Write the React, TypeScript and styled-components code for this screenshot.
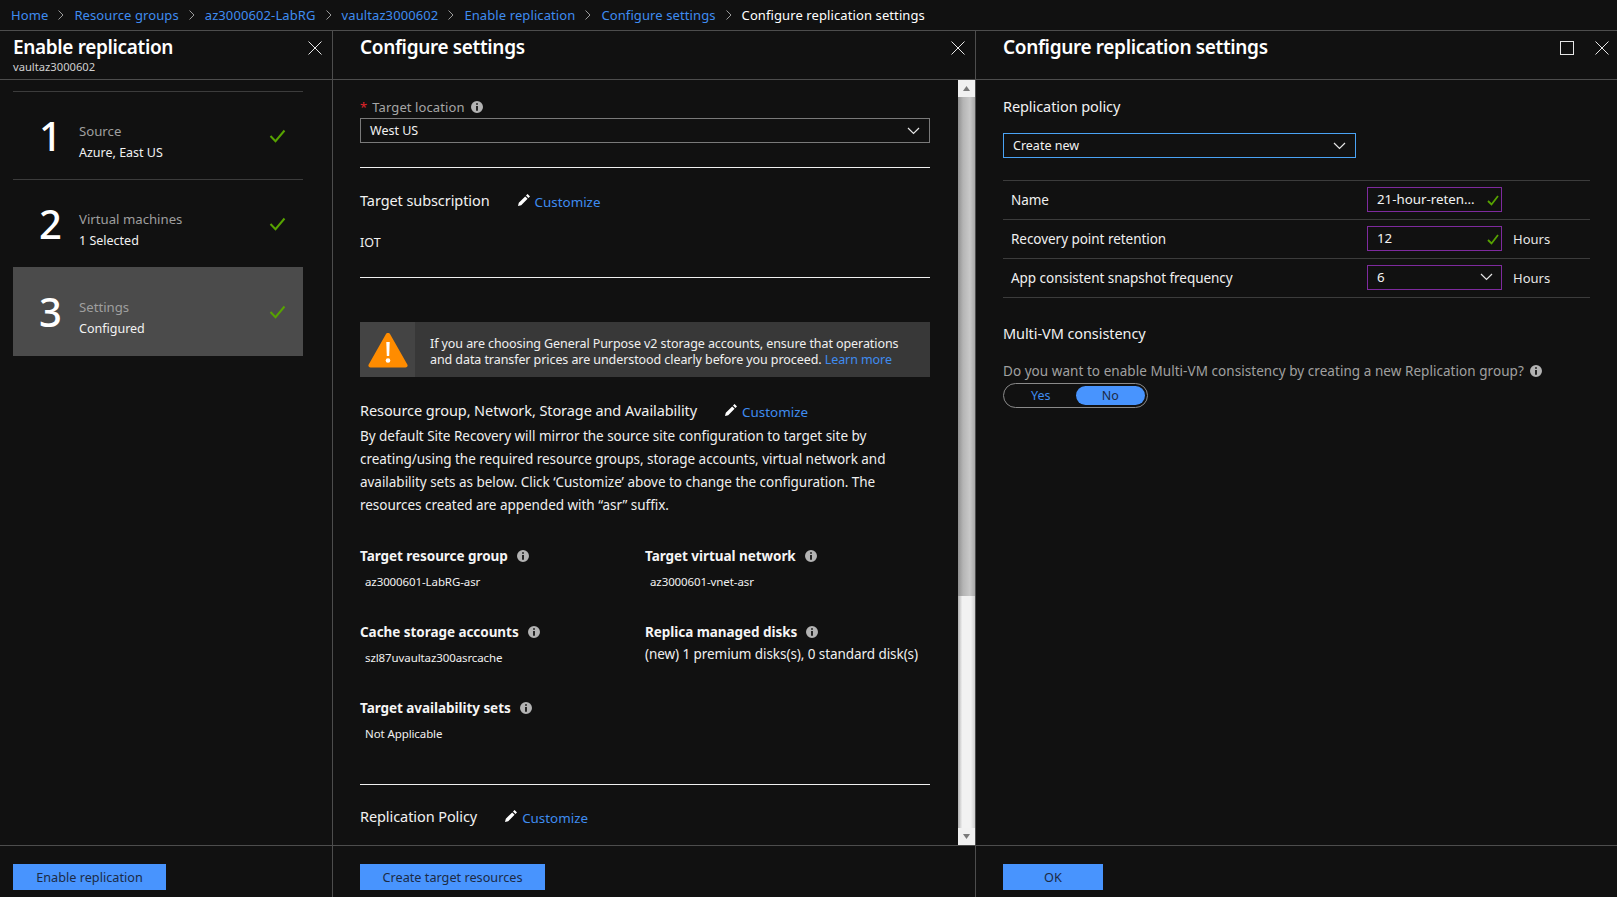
import React from 'react';
import styled, { createGlobalStyle } from 'styled-components';

const GlobalStyle = createGlobalStyle`
  html, body {
    margin: 0;
    padding: 0;
    background: #111111;
  }
  * {
    box-sizing: border-box;
  }
`;

const LINK = '#3f8cf0';
const BORDER = '#4d4d4d';

const Page = styled.div`
  width: 1617px;
  height: 897px;
  display: flex;
  flex-direction: column;
  overflow: hidden;
  background: #111111;
  color: #f2f2f2;
  font-family: 'Noto Sans', 'Open Sans', sans-serif;
  font-size: 13px;
`;

const Breadcrumb = styled.nav`
  height: 31px;
  flex: none;
  display: flex;
  align-items: center;
  padding: 0 0 1px 11px;
  border-bottom: 1px solid ${BORDER};
  font-size: 13px;
  letter-spacing: 0.1px;
`;

const Crumb = styled.span<{ $current?: boolean }>`
  color: ${(p) => (p.$current ? '#ffffff' : LINK)};
`;

const CrumbSep = styled.svg`
  width: 6px;
  height: 10px;
  margin: 0 10px 0 10px;
  fill: none;
  stroke: #9a9a9a;
  stroke-width: 1;
`;

const Blades = styled.div`
  flex: 1;
  display: flex;
  min-height: 0;
`;

const Blade = styled.section<{ $width: number; $last?: boolean }>`
  width: ${(p) => p.$width}px;
  flex: none;
  display: flex;
  flex-direction: column;
  border-right: ${(p) => (p.$last ? 'none' : `1px solid ${BORDER}`)};
`;

const BladeHeader = styled.header<{ $inset: number; $right?: number }>`
  height: 49px;
  flex: none;
  display: flex;
  justify-content: space-between;
  align-items: flex-start;
  padding: 4px ${(p) => p.$right ?? 10}px 0 ${(p) => p.$inset}px;
  border-bottom: 1px solid ${BORDER};
`;

const BladeTitle = styled.h2`
  margin: 0 0 1px;
  font-size: 19px;
  line-height: 25px;
  font-weight: 600;
  letter-spacing: -0.35px;
  color: #ffffff;
`;

const BladeSub = styled.div`
  font-size: 11.2px;
  line-height: 12px;
  color: #d0d0d0;
`;

const HeaderIcons = styled.div`
  display: flex;
  gap: 21px;
  padding-top: 6px;
`;

const HeaderIcon = styled.svg`
  width: 14px;
  height: 14px;
  fill: none;
  stroke: #e6e6e6;
  stroke-width: 1;
  display: block;
`;

const BladeBody = styled.div`
  flex: 1;
  display: flex;
  min-height: 0;
  overflow: hidden;
`;

const BladeFooter = styled.footer<{ $inset: number }>`
  height: 52px;
  flex: none;
  padding: 18px 0 0 ${(p) => p.$inset}px;
  border-top: 1px solid ${BORDER};
`;

const PrimaryButton = styled.button<{ $width: number }>`
  display: block;
  width: ${(p) => p.$width}px;
  height: 26px;
  padding: 0;
  border: none;
  background: #4894fe;
  color: #1c2b45;
  font: inherit;
  font-size: 12.7px;
`;

const Steps = styled.div`
  width: 100%;
  padding: 11px 29px 0 13px;
`;

const Step = styled.div<{ $active?: boolean }>`
  height: ${(p) => (p.$active ? 89 : 88)}px;
  display: flex;
  align-items: center;
  background: ${(p) => (p.$active ? '#4b4b4b' : 'transparent')};
  border-top: ${(p) => (p.$active ? 'none' : `1px solid #3c3c3c`)};
`;

const StepNumber = styled.div`
  width: 66px;
  padding-left: 26px;
  font-size: 40px;
  line-height: 40px;
  font-weight: 500;
  color: #ffffff;
`;

const StepText = styled.div`
  flex: 1;
  padding-top: 13px;
`;

const StepLabel = styled.div`
  font-size: 13.2px;
  line-height: 21px;
  color: #9f9f9f;
`;

const StepValue = styled.div`
  font-size: 12.5px;
  line-height: 21px;
  color: #f2f2f2;
`;

const StepCheck = styled.svg`
  width: 17px;
  height: 14px;
  margin: 0 17px 0 0;
  fill: none;
  stroke: #57a300;
  stroke-width: 2;
`;

const Scroller = styled.div`
  flex: 1;
  min-width: 0;
  padding: 0 28px 0 27px;
  overflow: hidden;
`;

const Scrollbar = styled.div`
  width: 17px;
  flex: none;
  display: flex;
  flex-direction: column;
  background: #f1f1f1;
`;

const ScrollArrow = styled.svg`
  width: 17px;
  height: 17px;
  flex: none;
  fill: #7a7a7a;
`;

const ScrollThumb = styled.div`
  height: 499px;
  flex: none;
  background: linear-gradient(90deg, #8f8f8f, #b5b5b5 30%, #c9c9c9 70%, #a8a8a8);
`;

const ScrollTrack = styled.div`
  flex: 1;
  background: linear-gradient(90deg, #b0b0b0, #f2f2f2 25%, #f2f2f2 75%, #cfcfcf);
`;

const FieldLabel = styled.div`
  display: flex;
  align-items: center;
  height: 22px;
  margin-top: 16px;
  color: #a6a6a6;
  font-size: 13px;
  letter-spacing: 0.1px;
`;

const Required = styled.span`
  color: #e0242a;
  margin-right: 5px;
`;

const InfoIcon = styled.svg<{ $gap?: number }>`
  width: 12px;
  height: 12px;
  margin-left: ${(p) => p.$gap ?? 6}px;
  flex: none;
  fill: #b3b3b3;
`;

const Select = styled.div<{ $width?: number; $focused?: boolean; $top?: number }>`
  width: ${(p) => (p.$width ? `${p.$width}px` : '100%')};
  height: 25px;
  margin-top: ${(p) => p.$top ?? 0}px;
  display: flex;
  align-items: center;
  justify-content: space-between;
  padding: 0 9px 0 9px;
  border: 1px solid ${(p) => (p.$focused ? '#4aa3f5' : '#7a7a7a')};
  font-size: 12.5px;
  color: #f2f2f2;
`;

const Chevron = styled.svg`
  width: 13px;
  height: 8px;
  fill: none;
  stroke: #e6e6e6;
  stroke-width: 1.2;
`;

const Rule = styled.hr<{ $top: number }>`
  height: 1px;
  margin: ${(p) => p.$top}px 0 0;
  border: none;
  background: #f0f0f0;
`;

const SectionRow = styled.div<{ $top: number; $gap: number }>`
  display: flex;
  align-items: center;
  height: 20px;
  margin-top: ${(p) => p.$top}px;
  gap: ${(p) => p.$gap}px;
  font-size: 14.5px;
  letter-spacing: -0.08px;
  color: #f2f2f2;
`;

const CustomizeLink = styled.a`
  display: flex;
  align-items: center;
  gap: 4px;
  color: ${LINK};
  font-size: 13.4px;
  letter-spacing: 0;
  padding-top: 3px;
`;

const Pencil = styled.svg`
  width: 14px;
  height: 14px;
  fill: #ffffff;
  margin-top: -4px;
`;

const PlainValue = styled.div`
  margin-top: 23px;
  font-size: 12.5px;
  line-height: 20px;
`;

const Warning = styled.div`
  display: flex;
  height: 55px;
  margin-top: 44px;
  background: #383838;
`;

const WarningIconCell = styled.div`
  width: 55px;
  flex: none;
  display: flex;
  align-items: center;
  justify-content: center;
  background: #444444;
`;

const WarningIcon = styled.svg`
  width: 40px;
  height: 36px;
`;

const WarningText = styled.div`
  padding: 14px 0 0 15px;
  font-size: 12.5px;
  line-height: 16px;
  letter-spacing: -0.08px;
  color: #f0f0f0;
`;

const InlineLink = styled.a`
  color: ${LINK};
`;

const Paragraph = styled.p`
  margin: 5px 0 0;
  font-size: 13.5px;
  line-height: 23px;
  letter-spacing: -0.03px;
  color: #efefef;
`;

const SummaryGrid = styled.div`
  display: grid;
  grid-template-columns: 285px 1fr;
  margin-top: 29px;
`;

const SummaryCell = styled.div`
  height: 76px;
`;

const SummaryLabel = styled.div`
  display: flex;
  align-items: center;
  height: 20px;
  font-size: 13.5px;
  font-weight: 700;
  letter-spacing: -0.05px;
  color: #f5f5f5;
`;

const SummaryValue = styled.div<{ $flush?: boolean }>`
  margin-top: ${(p) => (p.$flush ? '4px' : '8px')};
  padding-left: ${(p) => (p.$flush ? '0' : '5px')};
  font-size: ${(p) => (p.$flush ? '13.5px' : '11.5px')};
  line-height: 16px;
  letter-spacing: ${(p) => (p.$flush ? '-0.07px' : '-0.1px')};
  color: #f0f0f0;
`;

const RightBody = styled.div`
  flex: 1;
  min-width: 0;
  padding: 0 27px 0 27px;
`;

const SubHeading = styled.div<{ $top: number }>`
  margin-top: ${(p) => p.$top}px;
  font-size: 14.5px;
  line-height: 20px;
  letter-spacing: -0.08px;
  color: #f2f2f2;
`;

const SettingsTable = styled.div`
  margin-top: 22px;
  border-top: 1px solid #3c3c3c;
`;

const SettingsRow = styled.div`
  height: 39px;
  display: flex;
  align-items: center;
  padding: 0 0 1px 8px;
  border-bottom: 1px solid #3c3c3c;
`;

const SettingsLabel = styled.div`
  width: 356px;
  flex: none;
  font-size: 13.5px;
  letter-spacing: -0.04px;
  color: #f0f0f0;
`;

const SettingsInput = styled.div<{ $chevron?: boolean }>`
  width: 135px;
  height: 25px;
  flex: none;
  display: flex;
  align-items: center;
  justify-content: space-between;
  padding: 0 ${(p) => (p.$chevron ? 8 : 2)}px 2px 9px;
  border: 1px solid #7e2a9e;
  font-size: 13.3px;
  color: #f2f2f2;
`;

const InputCheck = styled.svg`
  width: 12px;
  height: 11px;
  margin-top: 3px;
  fill: none;
  stroke: #57a300;
  stroke-width: 1.8;
`;

const Unit = styled.div`
  margin-left: 11px;
  font-size: 13px;
  color: #e6e6e6;
`;

const Question = styled.div`
  display: flex;
  align-items: center;
  margin-top: 18px;
  height: 20px;
  font-size: 13.5px;
  letter-spacing: 0.05px;
  color: #a0a0a0;
`;

const Toggle = styled.div`
  width: 145px;
  height: 25px;
  margin-top: 2px;
  display: flex;
  align-items: center;
  padding: 0 2px;
  border: 1px solid #8a8a8a;
  border-radius: 13px;
`;

const ToggleOption = styled.div<{ $on?: boolean }>`
  flex: 1;
  height: 19px;
  display: flex;
  align-items: center;
  justify-content: center;
  border-radius: 10px;
  background: ${(p) => (p.$on ? '#4894fe' : 'transparent')};
  color: ${(p) => (p.$on ? '#1c2b45' : LINK)};
  font-size: 12.5px;
`;

const CloseGlyph = () => (
  <HeaderIcon viewBox="0 0 14 14">
    <path d="M.5.5l13 13M13.5.5l-13 13" />
  </HeaderIcon>
);

const Info = ({ gap }: { gap?: number }) => (
  <InfoIcon $gap={gap} viewBox="0 0 11 11">
    <path d="M5.5 0a5.5 5.5 0 1 0 0 11a5.5 5.5 0 0 0 0-11zM4.7 2h1.6v1.5H4.7zM4.7 4.5h1.6V9H4.7z" fillRule="evenodd" />
  </InfoIcon>
);

const ChevronGlyph = () => (
  <Chevron viewBox="0 0 13 8">
    <path d="M1 1l5.500 5.500L12 1" />
  </Chevron>
);

const CheckGlyph = () => (
  <InputCheck viewBox="0 0 12 11">
    <path d="M1 6l3.500 3.500L11 1" />
  </InputCheck>
);

const Customize = () => (
  <CustomizeLink>
    <Pencil viewBox="0 0 14 14">
      <path d="M10.600 1l2.400 2.400-1.600 1.600L9 2.600zM8.200 3.400l2.400 2.400-6.400 6.400L1 13l.8-3.200z" />
    </Pencil>
    Customize
  </CustomizeLink>
);

const steps = [
  { n: '1', label: 'Source', value: 'Azure, East US' },
  { n: '2', label: 'Virtual machines', value: '1 Selected' },
  { n: '3', label: 'Settings', value: 'Configured', active: true },
];

const crumbs = [
  'Home',
  'Resource groups',
  'az3000602-LabRG',
  'vaultaz3000602',
  'Enable replication',
  'Configure settings',
];

const summary = [
  { label: 'Target resource group', value: 'az3000601-LabRG-asr' },
  { label: 'Target virtual network', value: 'az3000601-vnet-asr' },
  { label: 'Cache storage accounts', value: 'szl87uvaultaz300asrcache' },
  { label: 'Replica managed disks', value: '(new) 1 premium disks(s), 0 standard disk(s)', flush: true },
  { label: 'Target availability sets', value: 'Not Applicable' },
];

const App = () => {
  return (
    <Page>
      <GlobalStyle />
      <Breadcrumb>
        {crumbs.map((c) => (
          <React.Fragment key={c}>
            <Crumb>{c}</Crumb>
            <CrumbSep viewBox="0 0 6 10">
              <path d="M.5.5L5 5 .5 9.500" />
            </CrumbSep>
          </React.Fragment>
        ))}
        <Crumb $current>Configure replication settings</Crumb>
      </Breadcrumb>

      <Blades>
        <Blade $width={333}>
          <BladeHeader $inset={13}>
            <div>
              <BladeTitle>Enable replication</BladeTitle>
              <BladeSub>vaultaz3000602</BladeSub>
            </div>
            <HeaderIcons>
              <CloseGlyph />
            </HeaderIcons>
          </BladeHeader>
          <BladeBody>
            <Steps>
              {steps.map((s) => (
                <Step key={s.n} $active={s.active}>
                  <StepNumber>{s.n}</StepNumber>
                  <StepText>
                    <StepLabel>{s.label}</StepLabel>
                    <StepValue>{s.value}</StepValue>
                  </StepText>
                  <StepCheck viewBox="0 0 17 14">
                    <path d="M1.500 7l5 5.200L15.500 1.500" />
                  </StepCheck>
                </Step>
              ))}
            </Steps>
          </BladeBody>
          <BladeFooter $inset={13}>
            <PrimaryButton $width={153}>Enable replication</PrimaryButton>
          </BladeFooter>
        </Blade>

        <Blade $width={643}>
          <BladeHeader $inset={27}>
            <BladeTitle>Configure settings</BladeTitle>
            <HeaderIcons>
              <CloseGlyph />
            </HeaderIcons>
          </BladeHeader>
          <BladeBody>
            <Scroller>
              <FieldLabel>
                <Required>*</Required>
                Target location
                <Info />
              </FieldLabel>
              <Select>
                West US
                <ChevronGlyph />
              </Select>
              <Rule $top={24} />
              <SectionRow $top={22} $gap={27}>
                Target subscription
                <Customize />
              </SectionRow>
              <PlainValue>IOT</PlainValue>
              <Rule $top={24} />
              <Warning>
                <WarningIconCell>
                  <WarningIcon viewBox="0 0 40 36">
                    <path
                      d="M20 1c1 0 1.800.5 2.300 1.400l17 30c.8 1.500 0 3.100-1.800 3.100H2.500C.7 35.500-.1 33.900.7 32.400l17-30C18.200 1.500 19 1 20 1z"
                      fill="#ff8c00"
                    />
                    <path d="M18.300 10h3.400l-.5 14h-2.400z" fill="#ffffff" />
                    <circle cx="20" cy="28.500" r="2.300" fill="#ffffff" />
                  </WarningIcon>
                </WarningIconCell>
                <WarningText>
                  If you are choosing General Purpose v2 storage accounts, ensure that operations
                  <br />
                  and data transfer prices are understood clearly before you proceed.{' '}
                  <InlineLink>Learn more</InlineLink>
                </WarningText>
              </Warning>
              <SectionRow $top={23} $gap={27}>
                Resource group, Network, Storage and Availability
                <Customize />
              </SectionRow>
              <Paragraph>
                By default Site Recovery will mirror the source site configuration to target site by
                <br />
                creating/using the required resource groups, storage accounts, virtual network and
                <br />
                availability sets as below. Click ‘Customize’ above to change the configuration. The
                <br />
                resources created are appended with “asr” suffix.
              </Paragraph>
              <SummaryGrid>
                {summary.map((s) => (
                  <SummaryCell key={s.label}>
                    <SummaryLabel>
                      {s.label}
                      <Info gap={9} />
                    </SummaryLabel>
                    <SummaryValue $flush={s.flush}>{s.value}</SummaryValue>
                  </SummaryCell>
                ))}
              </SummaryGrid>
              <Rule $top={10} />
              <SectionRow $top={21} $gap={27}>
                Replication Policy
                <Customize />
              </SectionRow>
            </Scroller>
            <Scrollbar>
              <ScrollArrow viewBox="0 0 17 17">
                <path d="M8.500 6l3.500 5H5z" />
              </ScrollArrow>
              <ScrollThumb />
              <ScrollTrack />
              <ScrollArrow viewBox="0 0 17 17">
                <path d="M8.500 11L5 6h7z" />
              </ScrollArrow>
            </Scrollbar>
          </BladeBody>
          <BladeFooter $inset={27}>
            <PrimaryButton $width={185}>Create target resources</PrimaryButton>
          </BladeFooter>
        </Blade>

        <Blade $width={641} $last>
          <BladeHeader $inset={27} $right={8}>
            <BladeTitle>Configure replication settings</BladeTitle>
            <HeaderIcons>
              <HeaderIcon viewBox="0 0 14 14">
                <rect x=".5" y=".5" width="13" height="13" />
              </HeaderIcon>
              <CloseGlyph />
            </HeaderIcons>
          </BladeHeader>
          <BladeBody>
            <RightBody>
              <SubHeading $top={16}>Replication policy</SubHeading>
              <Select $width={353} $focused $top={17}>
                Create new
                <ChevronGlyph />
              </Select>
              <SettingsTable>
                <SettingsRow>
                  <SettingsLabel>Name</SettingsLabel>
                  <SettingsInput>
                    21-hour-reten...
                    <CheckGlyph />
                  </SettingsInput>
                </SettingsRow>
                <SettingsRow>
                  <SettingsLabel>Recovery point retention</SettingsLabel>
                  <SettingsInput>
                    12
                    <CheckGlyph />
                  </SettingsInput>
                  <Unit>Hours</Unit>
                </SettingsRow>
                <SettingsRow>
                  <SettingsLabel>App consistent snapshot frequency</SettingsLabel>
                  <SettingsInput $chevron>
                    6
                    <ChevronGlyph />
                  </SettingsInput>
                  <Unit>Hours</Unit>
                </SettingsRow>
              </SettingsTable>
              <SubHeading $top={25}>Multi-VM consistency</SubHeading>
              <Question>
                Do you want to enable Multi-VM consistency by creating a new Replication group?
                <Info />
              </Question>
              <Toggle>
                <ToggleOption>Yes</ToggleOption>
                <ToggleOption $on>No</ToggleOption>
              </Toggle>
            </RightBody>
          </BladeBody>
          <BladeFooter $inset={27}>
            <PrimaryButton $width={100}>OK</PrimaryButton>
          </BladeFooter>
        </Blade>
      </Blades>
    </Page>
  );
};

export default App;
